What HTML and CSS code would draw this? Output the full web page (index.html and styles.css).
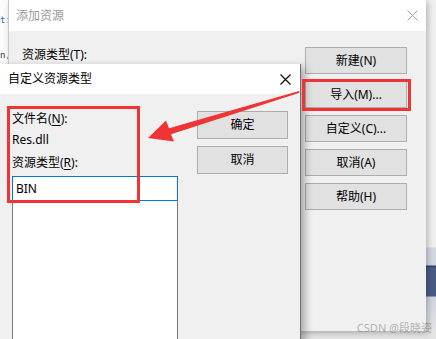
FILE: index.html
```html
<!DOCTYPE html>
<html lang="zh-CN">

<head>
    <meta charset="UTF-8">
    <title>添加资源</title>
    <link rel="stylesheet" href="styles.css">
</head>

<body>
    <div class="desk">
        <!-- editor behind the dialogs -->
        <div class="editor">
            <div class="code code-1">t:</div>
            <div class="code code-2">n,</div>
        </div>

        <!-- 添加资源 -->
        <div class="win outer">
            <div class="titlebar">
                <span class="title dim">添加资源</span>
                <svg class="close dim" width="11" height="11" viewBox="0 0 11 11">
                    <path d="M0.5 0.5 L10.5 10.5 M10.5 0.5 L0.5 10.5" stroke="currentColor" stroke-width="1" fill="none"/>
                </svg>
            </div>
            <div class="body outer-body">
                <div class="label">资源类型(T):</div>
                <div class="btn-col">
                    <button class="btn">新建(N)</button>
                    <button class="btn">导入(M)...</button>
                    <button class="btn">自定义(C)...</button>
                    <button class="btn">取消(A)</button>
                    <button class="btn">帮助(H)</button>
                </div>
            </div>
        </div>

        <!-- 自定义资源类型 -->
        <div class="win inner">
            <div class="titlebar">
                <span class="title">自定义资源类型</span>
                <svg class="close" width="11" height="11" viewBox="0 0 11 11">
                    <path d="M0.5 0.5 L10.5 10.5 M10.5 0.5 L0.5 10.5" stroke="currentColor" stroke-width="1.1" fill="none"/>
                </svg>
            </div>
            <div class="body inner-body">
                <div class="fields">
                    <div class="label">文件名(<u>N</u>):</div>
                    <div class="label value">Res.dll</div>
                    <div class="label type">资源类型(<u>R</u>):</div>
                    <div class="input">BIN</div>
                    <div class="listbox"></div>
                </div>
                <div class="btn-col small">
                    <button class="btn">确定</button>
                    <button class="btn">取消</button>
                </div>
            </div>
        </div>

        <!-- annotations -->
        <div class="mark mark-fields"></div>
        <div class="mark mark-import"></div>
        <svg class="arrow" width="436" height="339" viewBox="0 0 436 339">
            <polygon points="148,138 166,120.5 169,128.2 299,91 299.6,92.8 171,134.3 174,141.5" fill="#ee3434"/>
        </svg>
        <div class="watermark">CSDN @段晓姿</div>
    </div>
</body>

</html>
```

FILE: styles.css
```css
* {
    box-sizing: border-box;
}

html, body {
    margin: 0;
    padding: 0;
}

body {
    font-family: "Noto Sans", "Noto Sans CJK SC", sans-serif;
    font-size: 12px;
    color: #000;
    background-color: #e9e9e9;
}

.desk {
    position: relative;
    width: 436px;
    height: 339px;
    overflow: hidden;
    background: linear-gradient(#f0f0f0 0, #f0f0f0 247px, #d3d7e0 248px, #d3d7e0 265px,
        #2c3c66 266px, #4a5b86 268px, #4a5b86 296px, #cfd4df 297px, #e4e4e4 331px);
}

.editor {
    position: absolute;
    left: 0;
    top: 0;
    width: 10px;
    height: 70px;
    background-color: #fbfbfb;
    overflow: hidden;
}

.code {
    font-family: "DejaVu Sans Mono", monospace;
    font-size: 9px;
    line-height: 12px;
}

.code-1 {
    margin-top: 14px;
    color: #3a6aa8;
}

.code-2 {
    margin-top: 23px;
    color: #333;
}

/* windows */
.win {
    position: absolute;
    display: flex;
    flex-direction: column;
    background-color: #f0f0f0;
}

.titlebar {
    display: flex;
    align-items: center;
    justify-content: space-between;
    background-color: #fff;
    flex-shrink: 0;
}

.title {
    line-height: 16px;
}

.dim {
    color: #9a9a9a;
}

.close {
    display: block;
}

.body {
    display: flex;
    justify-content: space-between;
    flex: 1;
}

.label {
    line-height: 16px;
}

.label u {
    text-underline-offset: 2px;
}

/* 添加资源 */
.outer {
    left: 8px;
    top: 0;
    width: 418px;
    height: 331px;
    border-left: 1px solid #c9c9c9;
    box-shadow: 2px 2px 6px rgba(0, 0, 0, 0.25);
}

.outer .titlebar {
    height: 31px;
    padding: 0 8px 0 7px;
}

.outer-body {
    padding: 16px 19px 0 13px;
}

.btn-col {
    display: flex;
    flex-direction: column;
    gap: 7px;
    width: 102px;
}

.btn {
    font-family: "Noto Sans", "Noto Sans CJK SC", sans-serif;
    font-size: 12px;
    color: #000;
    height: 27px;
    padding: 0;
    line-height: 16px;
    background-color: #e1e1e1;
    border: 1px solid #adadad;
    border-radius: 0;
}

/* 自定义资源类型 */
.inner {
    left: -2px;
    top: 64px;
    width: 303px;
    height: 300px;
    border-right: 1px solid #6f6f6f;
    box-shadow: 4px 3px 8px rgba(0, 0, 0, 0.3);
}

.inner .titlebar {
    height: 30px;
    padding: 0 9px 0 10px;
}

.inner-body {
    padding: 17px 12px 0 14px;
}

.fields {
    display: flex;
    flex-direction: column;
    width: 166px;
}

.value {
    margin-top: 5px;
}

.type {
    margin-top: 7px;
}

.input {
    margin-top: 5px;
    height: 25px;
    line-height: 23px;
    padding-left: 3px;
    background-color: #fff;
    border: 1px solid #0078d7;
}

.listbox {
    height: 200px;
    background-color: #fff;
    border-left: 1px solid #7a7a7a;
    border-right: 1px solid #7a7a7a;
}

.btn-col.small {
    width: 91px;
}

.btn-col.small .btn {
    height: 28px;
}

/* annotations */
.mark {
    position: absolute;
    border: 3px solid #ee3434;
}

.mark-fields {
    left: 7px;
    top: 106px;
    width: 133px;
    height: 97px;
}

.mark-import {
    left: 302px;
    top: 79px;
    width: 109px;
    height: 32px;
}

.arrow {
    position: absolute;
    left: 0;
    top: 0;
}

.watermark {
    position: absolute;
    right: 4px;
    bottom: 5px;
    font-size: 11px;
    line-height: 12px;
    color: rgba(120, 120, 120, 0.55);
}
```
